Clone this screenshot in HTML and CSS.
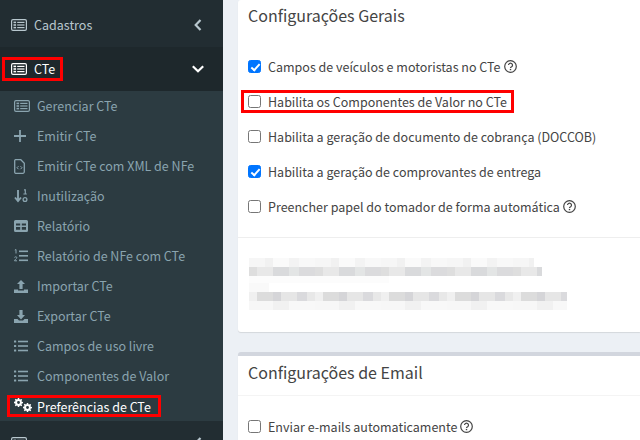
FILE: index.html
```html
<!DOCTYPE html>
<html lang="pt-BR">
<head>
    <meta charset="UTF-8">
    <title>Preferências de CTe</title>
    <link rel="stylesheet" href="styles.css">
</head>
<body>
    <svg class="defs" width="0" height="0">
        <symbol id="i-news" viewBox="0 0 16 12">
            <rect x="0.6" y="0.6" width="14.8" height="10.8" rx="1.4" fill="none" stroke="currentColor" stroke-width="1.2"/>
            <rect x="2.5" y="2.6" width="2.6" height="1.6" fill="currentColor"/>
            <rect x="2.5" y="5.2" width="2.6" height="1.6" fill="currentColor"/>
            <rect x="2.5" y="7.8" width="2.6" height="1.6" fill="currentColor"/>
            <rect x="6.2" y="2.8" width="7.3" height="1.2" fill="currentColor"/>
            <rect x="6.2" y="5.4" width="7.3" height="1.2" fill="currentColor"/>
            <rect x="6.2" y="8" width="7.3" height="1.2" fill="currentColor"/>
        </symbol>
        <symbol id="i-list" viewBox="0 0 14 12">
            <rect x="0" y="0.4" width="2.2" height="2.2" rx="0.4" fill="currentColor"/>
            <rect x="0" y="4.9" width="2.2" height="2.2" rx="0.4" fill="currentColor"/>
            <rect x="0" y="9.4" width="2.2" height="2.2" rx="0.4" fill="currentColor"/>
            <rect x="4" y="0.7" width="10" height="1.6" fill="currentColor"/>
            <rect x="4" y="5.2" width="10" height="1.6" fill="currentColor"/>
            <rect x="4" y="9.7" width="10" height="1.6" fill="currentColor"/>
        </symbol>
        <symbol id="i-help" viewBox="0 0 13 13">
            <circle cx="6.5" cy="6.5" r="5.8" fill="none" stroke="currentColor" stroke-width="1.2"/>
            <path d="M4.500 5.100a2 1.900 0 1 1 3.100 1.600c-.8.400-1.100.7-1.100 1.400" fill="none" stroke="currentColor" stroke-width="1.200"/>
            <rect x="5.800" y="8.900" width="1.400" height="1.300" fill="currentColor"/>
        </symbol>
        <symbol id="i-gear" viewBox="0 0 10 10">
            <path d="M4.300 0h1.400l.3 1.400.9.400 1.200-.8 1 1-.8 1.200.4.900 1.300.3v1.400l-1.300.3-.4.900.8 1.200-1 1-1.200-.8-.9.4-.3 1.200H4.300L4 8.700l-.9-.4-1.200.8-1-1 .8-1.200-.4-.9L0 5.700V4.300L1.300 4l.4-.9-.8-1.200 1-1 1.200.8.9-.4z M5 3.400a1.600 1.600 0 1 0 0 3.200a1.600 1.600 0 1 0 0-3.200z" fill="currentColor" fill-rule="evenodd"/>
        </symbol>
    </svg>

    <div class="layout">
        <aside class="sidebar">
            <a class="menu-top first">
                <svg class="icon-news"><use href="#i-news"/></svg>
                <span class="label">Cadastros</span>
                <svg class="chevron" viewBox="0 0 12 12"><path d="M8.500 1L3.700 6l4.800 5" fill="none" stroke="currentColor" stroke-width="2.200"/></svg>
            </a>
            <div class="menu-open">
                <a class="menu-top active">
                    <span class="mark mark-head">
                        <svg class="icon-news"><use href="#i-news"/></svg>
                        <span class="label">CTe</span>
                    </span>
                    <svg class="chevron" viewBox="0 0 12 12"><path d="M.8 3.200L6 8.200l5.200-5" fill="none" stroke="currentColor" stroke-width="2.200"/></svg>
                </a>
            </div>
            <nav class="submenu">
                <a class="sub-item"><span class="sub-icon"><svg class="icon-news"><use href="#i-news"/></svg></span>Gerenciar CTe</a>
                <a class="sub-item"><span class="sub-icon"><svg width="12" height="12" viewBox="0 0 12 12"><path d="M6 0v12M0 6h12" stroke="currentColor" stroke-width="1.800"/></svg></span>Emitir CTe</a>
                <a class="sub-item"><span class="sub-icon"><svg width="11" height="15" viewBox="0 0 11 15"><path d="M1.500.7h5.300l3.500 3.500v8.600a1.500 1.500 0 0 1-1.500 1.500H1.500A1 1 0 0 1 .7 13.300V1.500A1 1 0 0 1 1.500.7z" fill="none" stroke="currentColor" stroke-width="1.300"/><path d="M4.500 7.200L3 8.700l1.500 1.500M6.500 7.200L8 8.700l-1.500 1.500" fill="none" stroke="currentColor"/></svg></span>Emitir CTe com XML de NFe</a>
                <a class="sub-item"><span class="sub-icon"><svg width="14" height="14" viewBox="0 0 14 14"><path d="M4 1v11M1 8.500L4 12l3-3.500" fill="none" stroke="currentColor" stroke-width="1.900"/><path d="M10 .8h1.300v4M9.400 5h3.400" fill="none" stroke="currentColor" stroke-width="1.200"/><circle cx="11" cy="10.500" r="1.900" fill="none" stroke="currentColor" stroke-width="1.300"/></svg></span>Inutilização</a>
                <a class="sub-item"><span class="sub-icon"><svg width="14" height="12" viewBox="0 0 14 12"><path fill-rule="evenodd" d="M1.500 0h11A1.500 1.500 0 0 1 14 1.500v9a1.500 1.500 0 0 1-1.500 1.500h-11A1.500 1.500 0 0 1 0 10.500v-9A1.500 1.500 0 0 1 1.500 0zM2 3.500V5.500H6.200V3.500zM7.800 3.500V5.500H12V3.500zM2 7V9.700H6.200V7zM7.800 7V9.700H12V7z" fill="currentColor"/></svg></span>Relatório</a>
                <a class="sub-item"><span class="sub-icon"><svg width="14" height="14" viewBox="0 0 14 14"><path d="M.8 1.100L2 .5v4" fill="none" stroke="currentColor"/><path d="M.5 8.500c.4-1 2.500-.9 2.300.3-.1.800-1.800 1.500-2.300 3h2.500" fill="none" stroke="currentColor"/><rect x="5" y="1.500" width="9" height="1.600" fill="currentColor"/><rect x="5" y="6" width="9" height="1.600" fill="currentColor"/><rect x="5" y="10.500" width="9" height="1.600" fill="currentColor"/></svg></span>Relatório de NFe com CTe</a>
                <a class="sub-item"><span class="sub-icon"><svg width="14" height="13" viewBox="0 0 14 13"><path d="M7 0L11 4H8.600V9H5.400V4H3z" fill="currentColor"/><path d="M0 9.500H4V10.500H10V9.500H14V13H0z" fill="currentColor"/></svg></span>Importar CTe</a>
                <a class="sub-item"><span class="sub-icon"><svg width="14" height="13" viewBox="0 0 14 13"><path d="M5.400 0H8.600V5H11L7 9.500 3 5H5.400z" fill="currentColor"/><path d="M0 9H3.500L5 10.500H9L10.500 9H14V13H0z" fill="currentColor"/></svg></span>Exportar CTe</a>
                <a class="sub-item"><span class="sub-icon"><svg class="icon-list"><use href="#i-list"/></svg></span>Campos de uso livre</a>
                <a class="sub-item"><span class="sub-icon"><svg class="icon-list"><use href="#i-list"/></svg></span>Componentes de Valor</a>
                <a class="sub-item current">
                    <span class="mark mark-sub">
                        <span class="sub-icon gears">
                            <svg class="gear-big"><use href="#i-gear"/></svg>
                            <svg class="gear-small"><use href="#i-gear"/></svg>
                        </span>Preferências de CTe
                    </span>
                </a>
            </nav>
            <a class="menu-top">
                <svg class="icon-news"><use href="#i-news"/></svg>
                <svg class="chevron" viewBox="0 0 12 12"><path d="M8.500 1L3.700 6l4.800 5" fill="none" stroke="currentColor" stroke-width="2.200"/></svg>
            </a>
        </aside>

        <main class="content">
            <section class="card card-general">
                <h3 class="card-title">Configurações Gerais</h3>
                <div class="options">
                    <label class="option"><span class="check on"></span>Campos de veículos e motoristas no CTe<svg class="help"><use href="#i-help"/></svg></label>
                    <label class="option"><span class="mark mark-option"><span class="check"></span>Habilita os Componentes de Valor no CTe</span></label>
                    <label class="option"><span class="check"></span>Habilita a geração de documento de cobrança (DOCCOB)</label>
                    <label class="option"><span class="check on"></span>Habilita a geração de comprovantes de entrega</label>
                    <label class="option"><span class="check"></span>Preencher papel do tomador de forma automática<svg class="help"><use href="#i-help"/></svg></label>
                </div>
                <div class="blurred">
                    <div class="blur-row row-a"></div>
                    <div class="blur-row row-b"></div>
                    <div class="blur-row row-c"></div>
                    <div class="blur-row row-d"></div>
                    <div class="blur-row row-e"></div>
                    <div class="blur-row row-f"></div>
                </div>
            </section>

            <section class="card card-email">
                <h3 class="card-title bordered">Configurações de Email</h3>
                <div class="options">
                    <label class="option"><span class="check"></span>Enviar e-mails automaticamente<svg class="help"><use href="#i-help"/></svg></label>
                </div>
            </section>
        </main>
    </div>
</body>
</html>
```

FILE: styles.css
```css
html, body {
    margin: 0;
    height: 440px;
    overflow: hidden;
}

body {
    font-family: "Noto Sans CJK SC", "Noto Sans", sans-serif;
    font-size: 12.5px;
    background-color: #ecf0f5;
    color: #444;
}

.defs {
    display: block;
    height: 0;
}

.layout {
    display: flex;
    height: 440px;
}

/* sidebar */
.sidebar {
    width: 223px;
    flex-shrink: 0;
    background-color: #222d32;
    overflow: hidden;
    color: #b8c7ce;
}

.menu-top {
    display: flex;
    align-items: center;
    height: 44px;
    padding-left: 11px;
    gap: 7px;
    position: relative;
}

.menu-top.first {
    margin-top: 3px;
}

.menu-open {
    background-color: #1e282c;
}

.menu-top.active {
    color: #fff;
}

.menu-top .chevron {
    position: absolute;
    right: 19px;
    top: 16px;
    width: 12px;
    height: 12px;
}

.label {
    padding-bottom: 2px;
}

.icon-news {
    width: 16px;
    height: 12px;
    flex-shrink: 0;
}

.icon-list {
    width: 14px;
    height: 12px;
}

.mark {
    display: inline-flex;
    align-items: center;
    border: 3px solid #f00;
    box-sizing: border-box;
}

.mark-head {
    gap: 7px;
    margin-left: -9px;
    padding: 0 5px 0 6px;
    height: 24px;
}

.submenu {
    background-color: #2c3b41;
}

.sub-item {
    display: flex;
    align-items: center;
    box-sizing: border-box;
    height: 30px;
    padding-bottom: 2px;
    color: #8aa4af;
}

.sub-item .sub-icon {
    width: 23px;
    margin-left: 14px;
    padding-top: 2px;
    display: flex;
    align-items: center;
    flex-shrink: 0;
}

.sub-item.current {
    padding-bottom: 0;
    color: #fff;
}

.mark-sub {
    margin-left: 7px;
    padding: 0 7px 0 4px;
    height: 22px;
}

.sub-item .mark-sub .sub-icon {
    margin-left: 0;
    padding-top: 0;
    width: 23px;
}

.gears {
    position: relative;
    height: 14px;
}

.gear-big {
    position: absolute;
    left: 0;
    top: -1px;
    width: 9px;
    height: 9px;
}

.gear-small {
    position: absolute;
    left: 9px;
    top: 4px;
    width: 9px;
    height: 9px;
}

/* content */
.content {
    flex: 1;
    min-width: 0;
    padding-left: 15px;
}

.card {
    background-color: #fff;
    border-radius: 3px 0 0 3px;
    box-shadow: 0 1px 1px rgba(0, 0, 0, 0.1);
}

.card-general {
    height: 332px;
}

.card-email {
    margin-top: 20px;
    border-top: 4px solid #d2d6de;
    height: 100px;
}

.card-title {
    margin: 0;
    padding: 0 10px;
    font-size: 16px;
    font-weight: 400;
    line-height: 20px;
}

.card-general .card-title {
    padding-top: 5px;
}

.card-title.bordered {
    height: 40px;
    padding-top: 6px;
    box-sizing: border-box;
    border-bottom: 1px solid #f4f4f4;
}

.options {
    padding: 0 10px;
}

.card-general .options {
    padding-top: 24px;
    padding-bottom: 13px;
    border-bottom: 1px solid #eee;
}

.card-email .options {
    padding-top: 13px;
}

.option {
    display: flex;
    align-items: center;
    height: 35px;
    white-space: nowrap;
}

.check {
    width: 13px;
    height: 13px;
    box-sizing: border-box;
    border: 1px solid #767676;
    border-radius: 2.5px;
    background-color: #fff;
    margin-right: 7px;
    flex-shrink: 0;
    position: relative;
}

.check.on {
    background-color: #0075ff;
    border-color: #0075ff;
}

.check.on::after {
    content: "";
    position: absolute;
    left: 3.5px;
    top: 0.5px;
    width: 3px;
    height: 7px;
    border: solid #fff;
    border-width: 0 2px 2px 0;
    transform: rotate(42deg);
}

.help {
    width: 13px;
    height: 13px;
    margin-left: 3px;
    flex-shrink: 0;
}

.mark-option {
    margin-left: -7px;
    padding: 0 4px;
    height: 23px;
}

/* pixelated area in the reference */
.blurred {
    padding: 20px 0 0 11px;
}

.blur-row {
    height: 9px;
    background-size: 66px 100%;
}

.row-a {
    width: 285px;
    background-image: repeating-linear-gradient(90deg, #f6f6f6 0 16px, #f1f1f1 16px 24px, #fafafa 24px 40px, #f3f3f3 40px 50px, #f8f8f8 50px 66px);
}

.row-b {
    width: 293px;
    background-image: repeating-linear-gradient(90deg, #dedede 0 8px, #e8e8e8 8px 24px, #d9dadc 24px 40px, #e3e5e5 40px 50px, #dbdbdd 50px 66px);
}

.row-c {
    width: 140px;
    height: 7px;
    background-color: #fcfcfc;
}

.row-d {
    width: 20px;
    height: 9px;
    background-color: #f9f9f9;
}

.row-e {
    width: 318px;
    background-image: repeating-linear-gradient(90deg, #f0f0f0 0 8px, #dcdcdc 8px 24px, #d5d5d8 24px 32px, #e6e6e6 32px 48px, #dadadd 48px 58px, #e8e8e8 58px 66px);
}

.row-f {
    width: 318px;
    background-image: repeating-linear-gradient(90deg, #f7f7f7 0 24px, #f1f1f1 24px 40px, #f8f8f8 40px 66px);
}
```
